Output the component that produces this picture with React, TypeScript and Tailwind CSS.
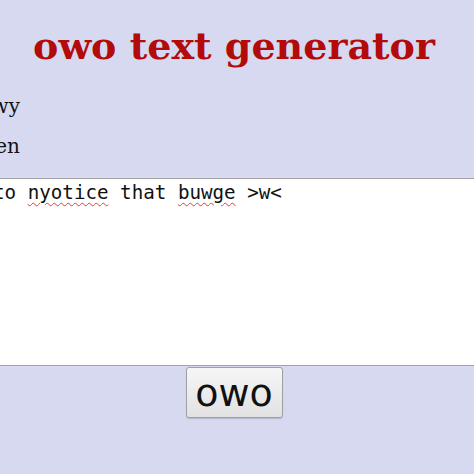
export default function App() {
  return (
    <div className="w-[474px] h-[474px] overflow-hidden bg-[#d6d9f0]">
      <div className="w-[900px] ml-[-216px] pt-[23px] font-['DejaVu_Serif',serif]">
        {/* title */}
        <h1 className="text-center text-[38px] leading-[normal] font-bold text-[#b30a0a]">
          owo text generator
        </h1>

        {/* options */}
        <div className="w-[236px] mt-[27px] flex flex-col gap-[17px] text-[20px] leading-[23px] text-[#111]">
          <div className="flex justify-end whitespace-nowrap">make evewything wowwy</div>
          <div className="flex justify-end whitespace-nowrap">stuttew now and then</div>
        </div>

        {/* text box */}
        <div className="mt-[20px] ml-[206px] w-[600px] h-[188px] bg-white border border-[#a3a3a3] px-[2px] py-[2px] font-['DejaVu_Sans_Mono',monospace] text-[19.2px] leading-[normal] text-[#111] whitespace-pre">
          to{' '}
          <span className="underline decoration-wavy decoration-[#e04040] decoration-1 underline-offset-[3px]">nyotice</span>{' '}
          that{' '}
          <span className="underline decoration-wavy decoration-[#e04040] decoration-1 underline-offset-[3px]">buwge</span>{' '}
          &gt;w&lt;
        </div>

        {/* button */}
        <div className="flex justify-center mt-px">
          <button className="w-[97px] h-[51px] border border-[#a0a0a0] rounded-[3px] bg-gradient-to-b from-[#f6f6f6] to-[#e2e2e2] font-['DejaVu_Sans',sans-serif] text-[38px] leading-none text-[#111] shadow-[0_1px_1px_rgba(0,0,0,0.15)]">
            owo
          </button>
        </div>
      </div>
    </div>
  );
}
